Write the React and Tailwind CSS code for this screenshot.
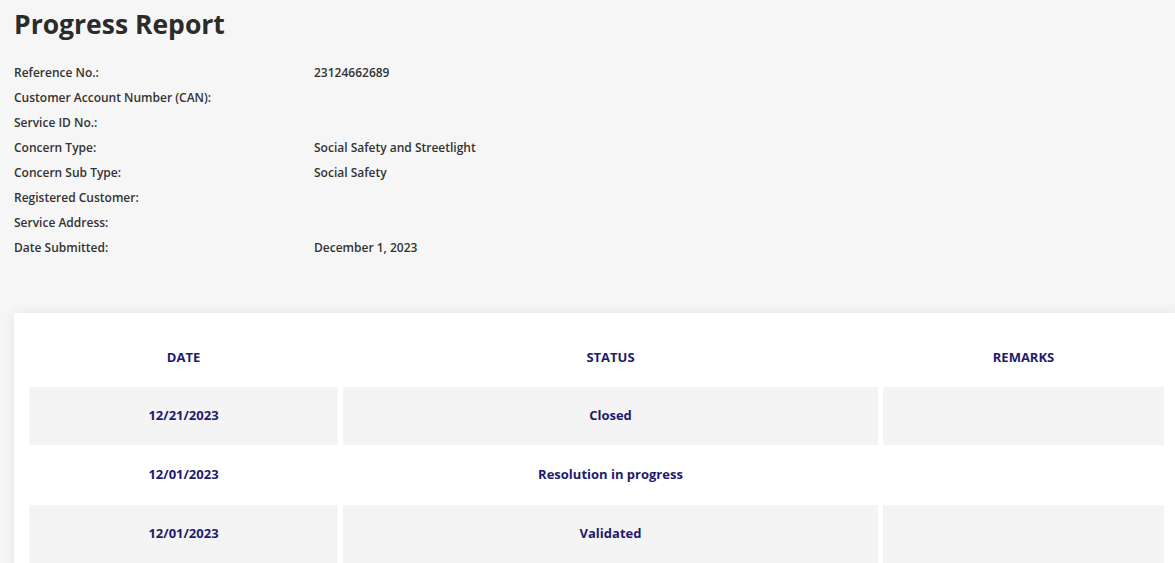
import React from "react";

const details = [
  ["Reference No.:", "23124662689"],
  ["Customer Account Number (CAN):", ""],
  ["Service ID No.:", ""],
  ["Concern Type:", "Social Safety and Streetlight"],
  ["Concern Sub Type:", "Social Safety"],
  ["Registered Customer:", ""],
  ["Service Address:", ""],
  ["Date Submitted:", "December 1, 2023"],
];

const rows = [
  { date: "12/21/2023", status: "Closed", remarks: "", shaded: true },
  { date: "12/01/2023", status: "Resolution in progress", remarks: "", shaded: false },
  { date: "12/01/2023", status: "Validated", remarks: "", shaded: true },
];

export default function App() {
  return (
    <div
      className="min-h-[563px] w-full overflow-hidden bg-[#f6f6f6] text-[#333333]"
      style={{ fontFamily: '"Open Sans", "Noto Sans", sans-serif' }}
    >
      <div className="pl-[14px] pt-[6px]">
        <h1 className="text-[26.5px] font-bold leading-[36px] text-[#2b2b2b]">Progress Report</h1>
        <div className="mt-[18px] flex flex-col">
          {details.map(([label, value]) => (
            <div key={label} className="flex h-[25px] items-center text-[12px] font-semibold">
              <div className="w-[300px] shrink-0">{label}</div>
              <div>{value}</div>
            </div>
          ))}
        </div>
      </div>
      <div className="mt-[53px] ml-[14px] w-[1165px] bg-white px-[10px] pt-[15px] pb-[20px] shadow-[0_0_12px_rgba(0,0,0,0.08)]">
        <table className="w-[1145px] table-fixed border-separate border-spacing-x-[5px] border-spacing-y-[1px] text-[13px] font-bold text-[#1e1b6b]">
          <colgroup>
            <col className="w-[309px]" />
            <col className="w-[535px]" />
            <col className="w-[281px]" />
          </colgroup>
          <thead>
            <tr className="h-[57px]">
              <th className="text-center font-bold">DATE</th>
              <th className="text-center font-bold">STATUS</th>
              <th className="text-center font-bold">REMARKS</th>
            </tr>
          </thead>
          <tbody>
            {rows.map((r, i) => (
              <tr key={i} className="h-[58px]">
                <td className={`text-center ${r.shaded ? "bg-[#f4f4f5]" : ""}`}>{r.date}</td>
                <td className={`text-center ${r.shaded ? "bg-[#f4f4f5]" : ""}`}>{r.status}</td>
                <td className={`text-center ${r.shaded ? "bg-[#f4f4f5]" : ""}`}>{r.remarks}</td>
              </tr>
            ))}
          </tbody>
        </table>
      </div>
    </div>
  );
}
